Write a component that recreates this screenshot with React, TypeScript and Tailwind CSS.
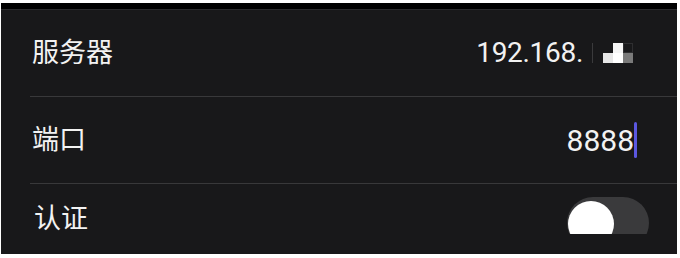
const font = { fontFamily: '"Roboto", "Noto Sans CJK SC", sans-serif' };

const Row = ({ label, children, last, pr = "pr-[44px]" }: { label: string; children: React.ReactNode; last?: boolean; pr?: string }) => (
  <div className={last ? "h-[70px] flex items-center pl-[31px]" : "h-[87px] flex flex-col pl-[29px]"}>
    {last ? (
      <div className="flex flex-1 items-center justify-between pr-[28px]">
        <span className="text-[27px] text-[#f2f2f2] pl-[2px]">{label}</span>
        {children}
      </div>
    ) : (
      <>
        <div className={`flex flex-1 items-center justify-between ${pr}`}>
          <span className="text-[27px] text-[#f2f2f2] pl-[2px]">{label}</span>
          {children}
        </div>
        <div className="h-px bg-[#38383a]" />
      </>
    )}
  </div>
);

export default function App() {
  return (
    <div className="w-[680px] h-[258px] bg-white pt-[3px] pl-px pr-[3px]" style={font}>
      <div className="h-[251px] bg-[#18181a] overflow-hidden">
        <div className="h-[6px] bg-black" />
        <div className="h-px bg-[#2c2c2e]" />
        <Row label="服务器">
          <div className="flex items-center">
            <span className="text-[28px] text-[#f2f2f2] tracking-[-0.3px]">192.168.</span>
            <div className="ml-[9px] w-px h-[20px] bg-[#3a3a3c]" />
            <div className="ml-[10px] grid grid-cols-3 grid-rows-2 w-[30px] h-[20px]">
              <div className="bg-transparent" />
              <div className="bg-[#f5f5f5]" />
              <div className="border border-[#2e2e30]" />
              <div className="bg-[#e6e6e6]" />
              <div className="bg-white" />
              <div className="bg-[#7a7a7a]" />
            </div>
          </div>
        </Row>
        <Row label="端口" pr="pr-[40px]">
          <div className="flex items-center">
            <span className="text-[30px] text-[#f2f2f2]">8888</span>
            <div className="w-[3px] h-[36px] bg-[#5b57e0] rounded-sm" />
          </div>
        </Row>
        <Row label="认证" last>
          <div className="relative w-[82px] h-[37px] mb-[10px] mt-[2px] overflow-hidden">
            <div className="h-[52px] rounded-full bg-[#3a3a3c]" />
            <div className="absolute left-[1px] top-[4px] w-[46px] h-[46px] rounded-full bg-white" />
          </div>
        </Row>
      </div>
    </div>
  );
}
